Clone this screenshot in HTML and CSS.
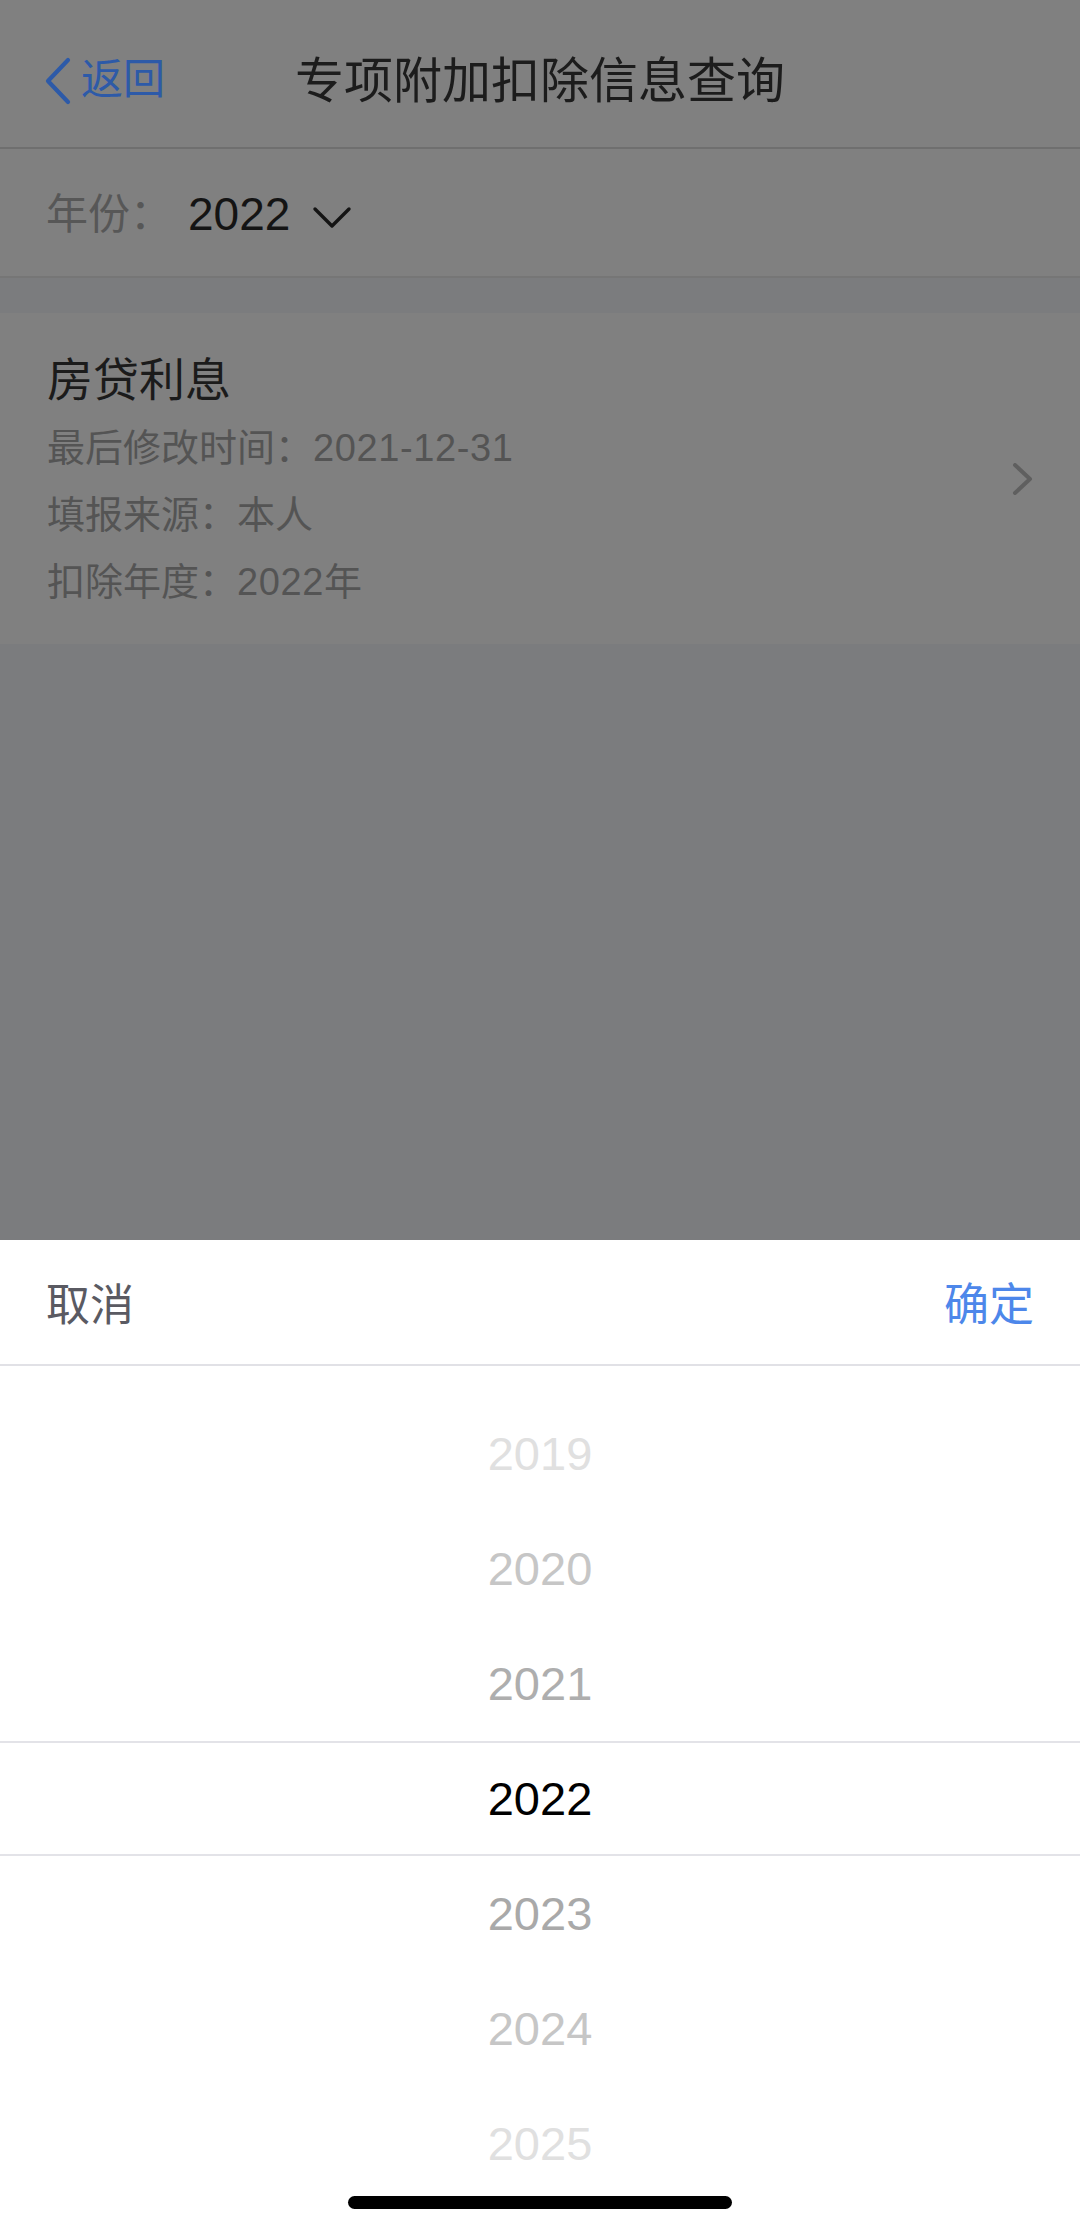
FILE: index.html
```html
<!DOCTYPE html>
<html lang="zh-CN">
<head>
<meta charset="utf-8">
<title>专项附加扣除信息查询</title>
<link rel="stylesheet" href="styles.css">
</head>
<body>
<div class="screen">
  <div class="page">
    <header class="nav">
      <div class="nav-row">
        <div class="back">
          <svg class="back-icon" width="28" height="48" viewBox="0 0 28 48"><path d="M24 3 L4 24 L24 45" fill="none" stroke="#2d5aa8" stroke-width="4.2" stroke-linecap="round" stroke-linejoin="round"/></svg>
          <span class="back-text">返回</span>
        </div>
        <div class="nav-title">专项附加扣除信息查询</div>
        <div class="nav-side"></div>
      </div>
    </header>
    <div class="filter">
      <span class="filter-label">年份：</span>
      <span class="filter-value">2022</span>
      <svg class="filter-caret" width="40" height="24" viewBox="0 0 40 24"><path d="M3 4 L20 21 L37 4" fill="none" stroke="#141414" stroke-width="3.4" stroke-linecap="round" stroke-linejoin="round"/></svg>
    </div>
    <div class="card">
      <div class="card-body">
        <div class="card-title">房贷利息</div>
        <div class="card-line">最后修改时间：<span class="num">2021-12-31</span></div>
        <div class="card-line">填报来源：本人</div>
        <div class="card-line">扣除年度：<span class="num">2022</span>年</div>
      </div>
      <svg class="card-arrow" width="22" height="32" viewBox="0 0 22 32"><path d="M3 2 L18 16 L3 30" fill="none" stroke="#5f5f5f" stroke-width="4" stroke-linecap="round" stroke-linejoin="round"/></svg>
    </div>
  </div>
  <div class="sheet">
    <div class="sheet-head">
      <span class="cancel">取消</span>
      <span class="confirm">确定</span>
    </div>
    <div class="picker">
      <div class="pick-row r3">2019</div>
      <div class="pick-row r2">2020</div>
      <div class="pick-row r1">2021</div>
      <div class="pick-row selected">2022</div>
      <div class="pick-row r1b">2023</div>
      <div class="pick-row r2">2024</div>
      <div class="pick-row r3">2025</div>
    </div>
    <div class="home-bar"></div>
  </div>
</div>
</body>
</html>
```

FILE: styles.css
```css
* { box-sizing: border-box; }
html, body {
  margin: 0;
  padding: 0;
}
body {
  width: 1080px;
  height: 2229px;
  overflow: hidden;
  font-family: "Liberation Sans", "Noto Sans CJK SC", sans-serif;
}
.screen {
  display: flex;
  flex-direction: column;
  height: 2229px;
}
.page {
  height: 1240px;
  background: #7b7c7e;
  display: flex;
  flex-direction: column;
}
.nav {
  background: #808080;
  height: 149px;
  padding-top: 17px;
  border-bottom: 2px solid #6f6f6f;
}
.nav-row {
  height: 130px;
  display: grid;
  grid-template-columns: 1fr auto 1fr;
  align-items: center;
}
.back {
  display: flex;
  align-items: center;
  padding-left: 44px;
}
.back-icon { display: block; margin-top: -2px; }
.back-text {
  margin-left: 9px;
  font-size: 42px;
  line-height: 60px;
  color: #2d5aa8;
  margin-top: -4px;
}
.nav-title {
  font-size: 49px;
  line-height: 60px;
  color: #1c1c1c;
  margin-top: -2px;
}
.filter {
  background: #808080;
  height: 129px;
  border-bottom: 2px solid #767676;
  display: flex;
  align-items: center;
  padding-left: 46px;
}
.filter-label {
  font-size: 42px;
  line-height: 60px;
  color: #575757;
  margin-top: 5px;
}
.filter-value {
  font-size: 46px;
  line-height: 60px;
  color: #141414;
  margin-left: 16px;
  margin-top: 2px;
}
.filter-caret {
  display: block;
  margin-left: 22px;
  margin-top: 8px;
}
.card {
  margin-top: 35px;
  background: #808080;
  display: flex;
  align-items: center;
  padding: 32px 46px 28px 47px;
}
.card-body { flex: 1; }
.card-title {
  font-size: 46px;
  line-height: 70px;
  color: #1b1b1b;
}
.card-line {
  font-size: 38px;
  line-height: 67px;
  color: #545454;
}
.num {
  letter-spacing: 0.6px;
}
.card-arrow {
  display: block;
  margin-top: -3px;
}
.sheet {
  flex: 1;
  background: #ffffff;
  position: relative;
}
.sheet-head {
  height: 126px;
  border-bottom: 2px solid #e1e1e6;
  display: flex;
  justify-content: space-between;
  align-items: center;
  padding: 0 46px 0 46px;
}
.cancel {
  font-size: 44px;
  line-height: 60px;
  color: #5a5a62;
  margin-top: 8px;
}
.confirm {
  font-size: 45px;
  line-height: 60px;
  color: #4d87ea;
  margin-top: 8px;
}
.picker {
  padding-top: 30px;
}
.pick-row {
  height: 115px;
  line-height: 115px;
  text-align: center;
  font-size: 47px;
}
.pick-row.r3 { color: #e0e0e0; }
.pick-row.r2 { color: #c6c6c6; }
.pick-row.r1 { color: #aeaeae; }
.pick-row.r1b { color: #a9a9a9; }
.pick-row.selected {
  color: #000000;
  border-top: 2px solid #e3e3e8;
  border-bottom: 2px solid #e3e3e8;
  line-height: 111px;
}
.home-bar {
  position: absolute;
  left: 348px;
  top: 956px;
  width: 384px;
  height: 13px;
  border-radius: 7px;
  background: #000000;
}
```
